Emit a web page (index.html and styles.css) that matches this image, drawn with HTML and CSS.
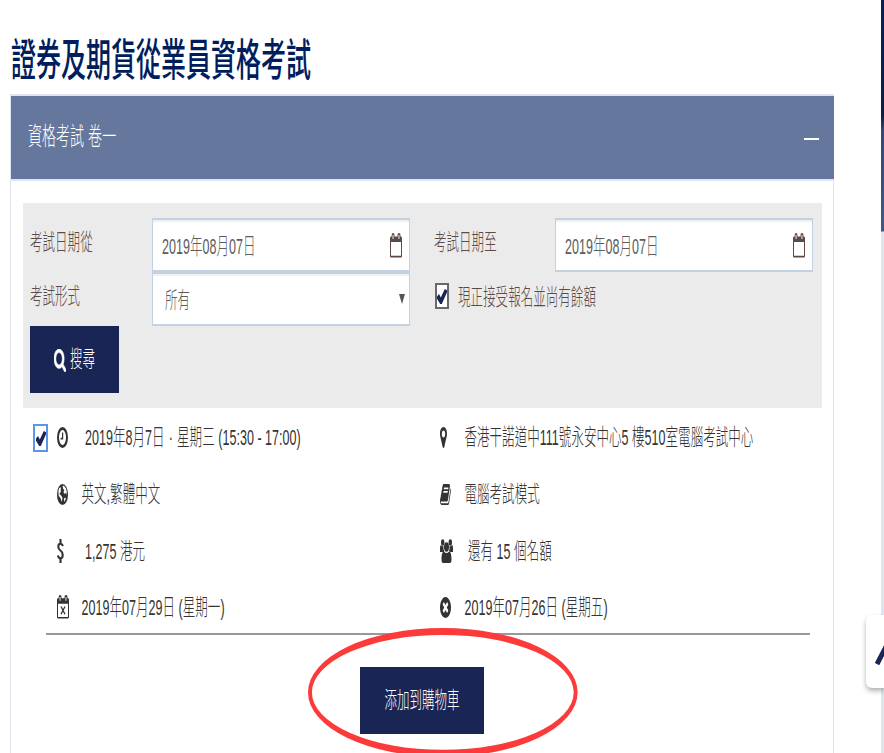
FILE: index.html
```html
<!DOCTYPE html>
<html lang="zh-Hant">
<head>
<meta charset="utf-8">
<title>證券及期貨從業員資格考試</title>
<link rel="stylesheet" href="styles.css">
</head>
<body>
<svg class="defs" width="0" height="0">
  <symbol id="calendar" viewBox="0 0 12 25" preserveAspectRatio="none">
    <path fill-rule="evenodd" d="M0 5Q0 3.500 1 3.500H1.700V2Q1.700 0 3 0T4.500 2V3.500H7.500V2Q7.500 0 9 0T10.500 2V3.500H11Q12 3.500 12 5V23Q12 24.500 11 24.500H1Q0 24.500 0 23ZM1 9V22.800H11V9ZM2.600 2V6H3.500V2ZM8.500 2V6H9.400V2Z"/>
  </symbol>
  <symbol id="tick" viewBox="0 0 10 14" preserveAspectRatio="none">
    <path d="M0 7L2 4.700L3.800 8L7.800 0L10 1.200V3L4.800 14H3.200L0 9Z"/>
  </symbol>
</svg>
<main class="page">
  <h1 class="title"><span class="t">證券及期貨從業員資格考試</span></h1>
  <section class="panel">
    <header class="panel-head"><span class="t">資格考試 卷一</span><i class="collapse"></i></header>
    <div class="panel-body">
      <form class="filters">
        <label class="label"><span class="t">考試日期從</span></label>
        <div class="field date"><span class="t">2019年08月07日</span><svg class="cal"><use href="#calendar"/></svg></div>
        <label class="label second"><span class="t">考試日期至</span></label>
        <div class="field date"><span class="t">2019年08月07日</span><svg class="cal"><use href="#calendar"/></svg></div>
        <label class="label"><span class="t">考試形式</span></label>
        <div class="field select"><span class="t">所有</span><i class="arrow"></i></div>
        <label class="available"><span class="check"><svg><use href="#tick"/></svg></span><span class="t">現正接受報名並尚有餘額</span></label>
        <button type="button" class="btn search"><svg viewBox="64 128 1664 1664" preserveAspectRatio="none"><path d="M1216 832q0-185-131.500-316.500t-316.500-131.500-316.500 131.500-131.500 316.500 131.500 316.500 316.500 131.500 316.500-131.500 131.500-316.500zm512 832q0 52-38 90t-90 38q-54 0-90-38l-343-342q-179 124-399 124-143 0-273.500-55.500t-225-150-150-225-55.500-273.500 55.500-273.500 150-225 225-150 273.500-55.500 273.500 55.500 225 150 150 225 55.500 273.500q0 220-124 399l343 343q37 37 37 90z"/></svg><span class="t">搜尋</span></button>
      </form>
      <div class="exam">
        <span class="check focused"><svg><use href="#tick"/></svg></span>
        <div class="details">
          <div class="item wide"><span class="icon"><svg class="w11" viewBox="0 0 11 21" preserveAspectRatio="none"><path fill-rule="evenodd" d="M0 10.500a5.500 10.500 0 1 0 11 0a5.500 10.500 0 1 0 -11 0ZM2 10.500a3.500 7.500 0 1 0 7 0a3.500 7.500 0 1 0 -7 0Z"/><path d="M5 5.500H6.200V12.500H3.600V10.800H5Z"/></svg></span><span class="t">2019年8月7日<span class="dot">·</span>星期三 (15:30 - 17:00)</span></div>
          <div class="item"><span class="icon"><svg class="w7" viewBox="0 0 7 20" preserveAspectRatio="none"><path fill-rule="evenodd" d="M3.500 0C5.600 0 7 2.800 7 6.500C7 9 6.200 10.500 4.400 19Q3.500 21 2.600 19C.8 10.500 0 9 0 6.500C0 2.800 1.400 0 3.500 0ZM3.500 3.300C2.400 3.300 1.800 4.700 1.800 6.600S2.400 9.900 3.500 9.900S5.200 8.500 5.200 6.600S4.600 3.300 3.500 3.300Z"/></svg></span><span class="t">香港干諾道中111號永安中心5 樓510室電腦考試中心</span></div>
          <div class="item"><span class="icon"><svg class="w11" viewBox="0 0 11 21" preserveAspectRatio="none"><ellipse cx="5.500" cy="10.500" rx="5.500" ry="10.500"/><path fill="#fff" d="M5.600 2.200L6.800 1.500L9 4.500L9.800 8L9.200 11L8.300 8.500L7.500 10L6.500 8L7.400 6L6.200 5ZM2 4.500L3.500 3L4 5L3.500 6L4 8L3 8.500L2.500 10L4.500 12L5.500 14L4.700 18L3.700 14.500L1.600 11.500L1.400 7ZM7 14.500L8.500 13.500L8.800 15L7.200 18Z"/></svg></span><span class="t">英文,繁體中文</span></div>
          <div class="item"><span class="icon"><svg class="w11" viewBox="64 128 1664 1536" preserveAspectRatio="none"><path d="M1703 478q40 57 18 129l-275 906q-19 64-76.500 107.500t-122.500 43.500h-923q-77 0-148.500-53.500t-99.500-131.500q-24-67-2-127 0-4 3-27t4-37q1-8-3-21.500t-3-19.500q2-11 8-21t16.500-23.500 16.500-23.500q23-38 45-91.500t30-91.500q3-10 .5-30t-.5-28q3-11 17-28t17-23q21-36 42-92t25-90q1-9-2.500-32t.5-28q4-13 22-30.500t22-22.500q19-26 42.500-84.500t27.500-96.500q1-8-3-25.500t-2-26.500q2-8 9-18t18-23 17-21q8-12 16.500-30.500t15-35 16-36 19.500-32 26.500-23.500 36-11.500 47.500 5.500l-1 3q38-9 51-9h761q74 0 114 56t18 130l-274 906q-36 119-71.500 153.500t-128.500 34.500h-869q-27 0-38 15-11 16-1 43 24 70 144 70h923q29 0 56-15.500t35-41.500l300-987q7-22 5-57 38 15 59 43zm-1064 2q-4 13 2 22.500t20 9.500h608q13 0 25.500-9.500t16.500-22.500l21-64q4-13-2-22.500t-20-9.500h-608q-13 0-25.500 9.500t-16.500 22.500zm-83 256q-4 13 2 22.500t20 9.500h608q13 0 25.500-9.500t16.500-22.500l21-64q4-13-2-22.500t-20-9.500h-608q-13 0-25.500 9.500t-16.500 22.500z"/></svg></span><span class="t">電腦考試模式</span></div>
          <div class="item wide"><span class="icon"><svg class="w7 tall" viewBox="0 0 7 24" preserveAspectRatio="none"><path fill="none" stroke="#333" stroke-width="2.100" d="M6 7Q5 4.700 3.500 4.700Q1.300 4.700 1.300 7.700C1.300 12.500 5.700 10.500 5.700 15.800Q5.700 19.400 3.500 19.400Q1.700 19.400 .8 16.600M3.500 0V4.700M3.500 19V24"/></svg></span><span class="t">1,275 港元</span></div>
          <div class="item mid"><span class="icon"><svg class="w13 tall" viewBox="0 0 13 24" preserveAspectRatio="none"><ellipse cx="2.700" cy="3.500" rx="1.700" ry="3.200"/><ellipse cx="10.300" cy="3.500" rx="1.700" ry="3.200"/><ellipse cx="6.500" cy="8" rx="2.500" ry="4.700"/><path d="M0 13V9Q0 6 1 6Q2.500 8 3.500 7V10L4.300 13ZM13 13V9Q13 6 12 6Q10.500 8 9.500 7V10L8.700 13ZM1.500 20.500C1.500 15 2.500 12.500 4 12.500Q6.500 15.500 9 12.500C10.500 12.500 11.500 15 11.500 20.500Q11.500 24 9.800 24H3.200Q1.500 24 1.500 20.500Z"/></svg></span><span class="t">還有 15 個名額</span></div>
          <div class="item"><span class="icon"><svg class="w12 tall" viewBox="0 0 12 25" preserveAspectRatio="none"><use href="#calendar" width="12" height="25"/><path stroke="#333" stroke-width="1.300" d="M4 12L8 20M8 12L4 20"/></svg></span><span class="t">2019年07月29日 (星期一)</span></div>
          <div class="item"><span class="icon"><svg class="w11" viewBox="128 128 1536 1536" preserveAspectRatio="none"><path d="M1277 1122q0-26-19-45l-181-181 181-181q19-19 19-45 0-27-19-46l-90-90q-19-19-46-19-26 0-45 19l-181 181-181-181q-19-19-45-19-27 0-46 19l-90 90q-19 19-19 46 0 26 19 45l181 181-181 181q-19 19-19 45 0 27 19 46l90 90q19 19 46 19 26 0 45-19l181-181 181 181q19 19 45 19 27 0 46-19l90-90q19-19 19-46zm387-226q0 209-103 385.500t-279.500 279.500-385.500 103-385.500-103-279.500-279.500-103-385.500 103-385.500 279.500-279.500 385.500-103 385.500 103 279.500 279.500 103 385.500z"/></svg></span><span class="t">2019年07月26日 (星期五)</span></div>
        </div>
      </div>
      <div class="actions">
        <button type="button" class="btn add"><span class="t">添加到購物車</span></button>
        <svg class="ring" viewBox="0 0 270 130"><path fill="#fd3a3a" fill-rule="evenodd" d="M0 64.400a134.800 64.400 0 1 0 269.600 0a134.800 64.400 0 1 0 -269.600 0ZM3.900 64.400a130.900 57.400 0 1 0 261.800 0a130.900 57.400 0 1 0 -261.800 0Z"/></svg>
      </div>
    </div>
  </section>
</main>
<aside class="edge"></aside>
<a class="totop"><svg viewBox="0 0 18 30"><path d="M2 26L14 3L26 26" fill="none" stroke="#192555" stroke-width="5"/></svg></a>
</body>
</html>
```
FILE: styles.css
```css
* { box-sizing: border-box; }
html, body { height: 753px; overflow: hidden; }
body {
  margin: 0;
  position: relative;
  background: #fff;
  color: #333;
  font: 300 12.5px/24px "Liberation Sans", "Noto Sans CJK TC", sans-serif;
}
svg { display: block; fill: currentColor; flex: none; }
.defs { position: absolute; }

/* Tall, condensed lettering */
.t { display: inline-block; white-space: pre; letter-spacing: .04px; transform: translateY(1px) scaleY(1.82); }

.page { width: 824px; margin-left: 10px; }
.title {
  height: 94px;
  margin: 0;
  padding: 42px 0 0 1px;
  color: #001e5d;
  font-size: 25px;
  line-height: 36px;
  font-weight: 500;
}
.title .t { letter-spacing: 0; transform: scaleY(1.78); }
.panel { height: 680px; border: solid #dfe4ef; border-width: 2px 1px 0; }
.panel-head {
  display: flex;
  align-items: center;
  justify-content: space-between;
  height: 85px;
  margin-right: -1px;
  padding: 0 15px 4px 17px;
  background: #66779d;
  border-bottom: 2px solid #dfe4ef;
  color: #fff;
  font-size: 14px;
}
.panel-head .t { transform: scaleY(1.82); }
.collapse { width: 15px; height: 2px; margin-top: 6px; background: #fff; }
.panel-body { padding: 22px 11px 0 12px; }

.filters {
  display: grid;
  grid-template-columns: 122px 258px 145px 258px;
  grid-template-rows: 54px 54px 67px;
  height: 205px;
  padding: 15px 0 0 7px;
  background: #ebebeb;
  color: #5b4a45;
}
.label { padding-top: 12px; }
.second { padding-left: 24px; }
.field {
  display: flex;
  align-items: center;
  justify-content: space-between;
  padding: 2px 7px 0 9px;
  background: #fff;
  border: solid #c2d2e3;
  border-width: 2px 1px;
  box-shadow: inset 0 2px 1px #f0f0f0;
  color: #5c5c5c;
}
.select { padding: 2px 4px 0 12px; }
.cal { width: 12px; height: 25px; margin-top: -2px; color: #5b4a45; }
.arrow {
  border: solid transparent;
  border-width: 10px 3px 0;
  border-top-color: #555;
  margin-top: -2px;
}
.available {
  grid-column: 3 / 5;
  display: flex;
  align-items: center;
  gap: 9px;
  padding: 0 0 6px 25px;
}
.check {
  display: flex;
  justify-content: center;
  align-items: center;
  flex: none;
  width: 14px;
  height: 26px;
  border: 2px solid #69686d;
  background: #fff;
  color: #192555;
}
.check svg { width: 10px; height: 15px; }
.available .t { margin-top: 2px; }
.btn {
  display: flex;
  align-items: center;
  justify-content: center;
  height: 67px;
  padding: 0;
  border: 0;
  background: #192555;
  color: #fff;
  font: inherit;
}
.search { width: 89px; gap: 4px; }
.btn .t { margin-top: -2px; }
.search svg { width: 12px; height: 23px; margin-top: 1px; stroke: #fff; stroke-width: 50px; }

.exam { display: flex; height: 226px; margin: 1px 12px 0 23px; border-bottom: 2px solid #999; }
.focused { margin: 15px 0 0 -13px; width: 15px; height: 28px; border-color: #5c94e6; }
.details {
  display: grid;
  grid-template-columns: 383px 1fr;
  grid-template-rows: repeat(4, 56.700px);
  margin-left: 9px;
  height: 224px;
}
.item { display: flex; align-items: center; white-space: nowrap; }
.icon { width: 24.500px; flex: none; }
.wide .icon { width: 28px; }
.mid .icon { width: 28px; }
.dot { display: inline-block; width: 12.500px; text-align: center; }
.icon svg { height: 21px; }
.icon .tall { height: 24px; }
.w7 { width: 7px; }
.w11 { width: 11px; }
.w12 { width: 12px; }
.w13 { width: 13px; }

.actions { position: relative; padding-top: 32px; }
.add { width: 124px; margin-left: 337px; }
.ring { position: absolute; left: 285px; top: -7px; width: 270px; height: 130px; }

.edge {
  position: absolute;
  right: 0;
  top: 0;
  width: 3px;
  height: 753px;
  background: linear-gradient(#00235a 0, #0b1e50 115px, #34477d 130px, #3b5a8c 231px, #dfe5ee 232px);
}
.totop {
  position: absolute;
  left: 866px;
  top: 615px;
  width: 18px;
  height: 73px;
  padding: 23px 0 0 9px;
  border-radius: 6px 0 0 6px;
  background: #fff;
  box-shadow: 0 3px 5px rgba(0, 0, 0, .3);
  overflow: hidden;
}
.totop svg { width: 18px; height: 30px; }
```
